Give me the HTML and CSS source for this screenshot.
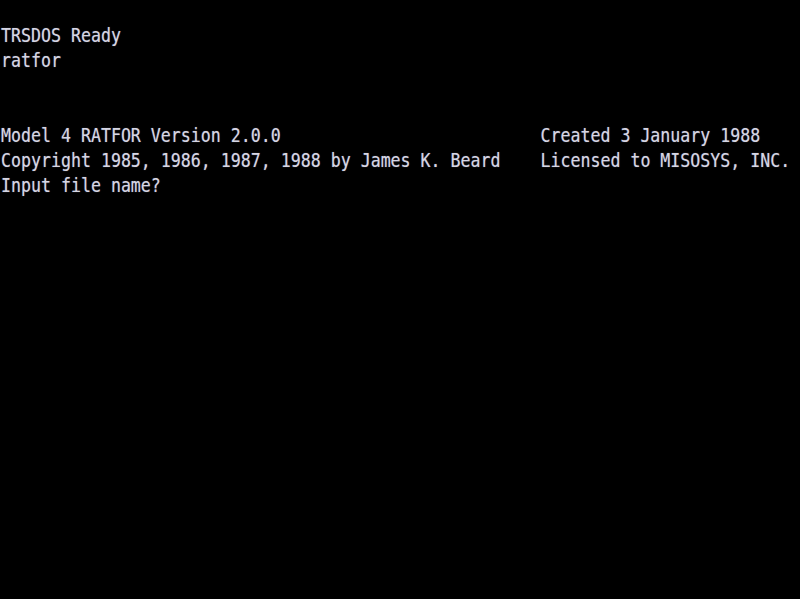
FILE: index.html
```html
<!DOCTYPE html>
<html>
<head>
<meta charset="utf-8">
<title>TRSDOS</title>
<link rel="stylesheet" href="styles.css">
</head>
<body>
<main class="screen">
<pre class="text">

TRSDOS Ready
ratfor


Model 4 RATFOR Version 2.0.0                          Created 3 January 1988
Copyright 1985, 1986, 1987, 1988 by James K. Beard    Licensed to MISOSYS, INC.
Input file name?</pre>
</main>
</body>
</html>
```
FILE: styles.css
```css
html, body {
  margin: 0;
  padding: 0;
  background: #000;
  height: 100%;
  overflow: hidden;
}
.screen {
  width: 800px;
  height: 599px;
  background: #000;
  overflow: hidden;
}
.text {
  margin: -1.5px 0 0 0;
  padding: 0 0 0 1px;
  font-family: "DejaVu Sans Mono", monospace;
  font-size: 16.6px;
  line-height: 20.8px;
  color: #d6d6e4;
  white-space: pre;
  transform: scaleY(1.2);
  transform-origin: 0 0;
  text-shadow: 0 0 1px rgba(200, 200, 230, 0.5);
}
```
